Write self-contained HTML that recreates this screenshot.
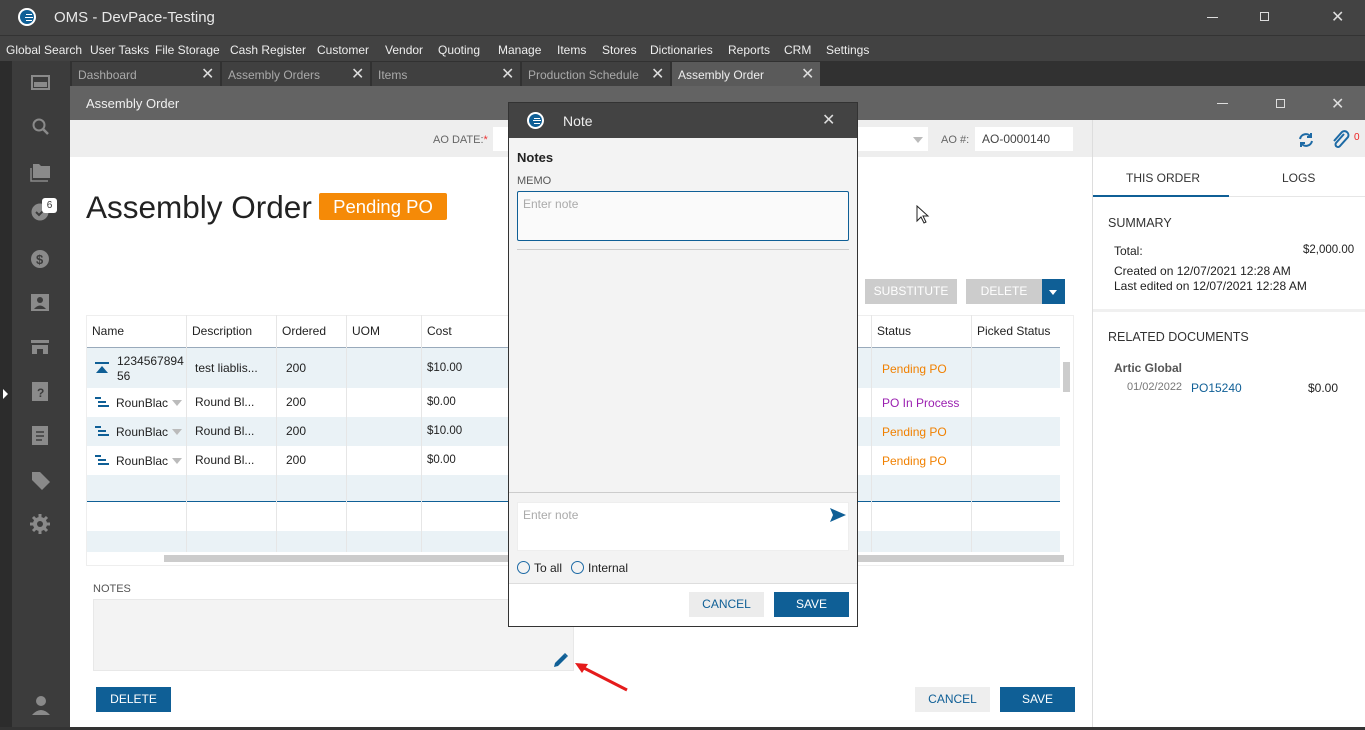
<!DOCTYPE html>
<html><head><meta charset="utf-8"><style>
*{box-sizing:border-box;margin:0;padding:0}
body{width:1365px;height:730px;overflow:hidden;position:relative;font-family:"Liberation Sans",sans-serif;font-size:12px;color:#222;background:#fff}
.a{position:absolute}
.t{white-space:nowrap}
.x{color:#ddd;font-size:16px}
.m{position:absolute;top:43px;color:#eee;font-size:12px;white-space:nowrap}
</style></head><body>
<div class="a" style="left:0;top:0;width:1365px;height:35px;background:#434343"></div>
<div class="a" style="left:18px;top:8px;width:18px;height:18px;border-radius:50%;background:#fff"></div>
<div class="a" style="left:20px;top:10px;width:14px;height:14px;border-radius:50%;background:#0f5f96"></div>
<div class="a" style="left:26px;top:14px;width:6px;height:1px;background:#fff"></div>
<div class="a" style="left:25px;top:17px;width:8px;height:1px;background:#fff"></div>
<div class="a" style="left:26px;top:20px;width:6px;height:1px;background:#fff"></div>
<div class="a t" style="left:54px;top:9px;color:#e8e8e8;font-size:15px">OMS - DevPace-Testing</div>
<div class="a" style="left:1207px;top:17px;width:11px;height:1px;background:#ddd"></div>
<div class="a" style="left:1260px;top:12px;width:9px;height:9px;border:1px solid #ddd"></div>
<div class="a t x" style="left:1331px;top:7px">✕</div>
<div class="a" style="left:0;top:35px;width:1365px;height:26px;background:#424242;border-top:1px solid #333"></div>
<div class="m" style="left:6px">Global Search</div>
<div class="m" style="left:90px">User Tasks</div>
<div class="m" style="left:155px">File Storage</div>
<div class="m" style="left:230px">Cash Register</div>
<div class="m" style="left:317px">Customer</div>
<div class="m" style="left:385px">Vendor</div>
<div class="m" style="left:438px">Quoting</div>
<div class="m" style="left:498px">Manage</div>
<div class="m" style="left:557px">Items</div>
<div class="m" style="left:602px">Stores</div>
<div class="m" style="left:650px">Dictionaries</div>
<div class="m" style="left:728px">Reports</div>
<div class="m" style="left:784px">CRM</div>
<div class="m" style="left:826px">Settings</div>
<div class="a" style="left:0;top:61px;width:12px;height:669px;background:#2c2c2c"></div>
<div class="a" style="left:12px;top:61px;width:58px;height:669px;background:#3c3c3c"></div>
<div class="a" style="left:3px;top:389px;width:0;height:0;border-top:5px solid transparent;border-bottom:5px solid transparent;border-left:5px solid #fff"></div>
<svg class="a" style="left:28px;top:70px" width="26" height="470" fill="#8a8a8a">
<rect x="4" y="6" width="17" height="13" fill="none" stroke="#8a8a8a" stroke-width="2"/><rect x="6" y="12" width="13" height="5"/>
<circle cx="11" cy="55" r="5.5" fill="none" stroke="#8a8a8a" stroke-width="2"/><path d="M15 59l5 5" stroke="#8a8a8a" stroke-width="2.5"/>
<path d="M5 94h6l2 2h9v12h-17z"/><path d="M3 98v13h17" fill="none" stroke="#8a8a8a" stroke-width="1.5"/>
<circle cx="12" cy="142" r="8.5"/><path d="M8 142l3 3 5-5" fill="none" stroke="#3c3c3c" stroke-width="2"/>
<circle cx="12" cy="189" r="9"/><text x="8" y="194" font-size="13" font-weight="bold" fill="#3c3c3c" font-family="Liberation Sans">$</text>
<rect x="3" y="224" width="18" height="17"/><circle cx="12" cy="230" r="3" fill="#3c3c3c"/><path d="M6 239q6-7 12 0z" fill="#3c3c3c"/>
<path d="M3 270h18v3h-18z M4 275h16v9h-5v-5h-6v5h-5z"/>
<rect x="4" y="312" width="16" height="19"/><text x="9" y="327" font-size="12" font-weight="bold" fill="#3c3c3c" font-family="Liberation Sans">?</text>
<rect x="4" y="356" width="16" height="19"/><path d="M8 362h8M8 366h8M8 370h6" stroke="#3c3c3c" stroke-width="1.5"/>
<path d="M4 402l8 0 10 10-8 8-10-10z"/>
<path d="M12 444v20M2 454h20M5 447l14 14M19 447l-14 14" stroke="#8a8a8a" stroke-width="3"/><circle cx="12" cy="454" r="7"/><circle cx="12" cy="454" r="3" fill="#3c3c3c"/>
</svg>
<div class="a" style="left:42px;top:198px;width:15px;height:15px;background:#fff;border-radius:3px;font-size:10px;text-align:center;line-height:15px;color:#333">6</div>
<svg class="a" style="left:30px;top:695px" width="22" height="22" fill="#8a8a8a"><circle cx="11" cy="6" r="5"/><path d="M2 20q9-10 18 0z"/></svg>
<div class="a" style="left:70px;top:61px;width:1295px;height:25px;background:#313131"></div>
<div class="a" style="left:72px;top:62px;width:148px;height:24px;background:#404040"></div>
<div class="a" style="left:222px;top:62px;width:148px;height:24px;background:#404040"></div>
<div class="a" style="left:372px;top:62px;width:148px;height:24px;background:#404040"></div>
<div class="a" style="left:522px;top:62px;width:148px;height:24px;background:#404040"></div>
<div class="a" style="left:672px;top:62px;width:148px;height:24px;background:#5a5a5a"></div>
<div class="a t" style="left:78px;top:68px;color:#aaa">Dashboard</div><div class="a x" style="left:201px;top:64px">✕</div>
<div class="a t" style="left:228px;top:68px;color:#aaa">Assembly Orders</div><div class="a x" style="left:351px;top:64px">✕</div>
<div class="a t" style="left:378px;top:68px;color:#aaa">Items</div><div class="a x" style="left:501px;top:64px">✕</div>
<div class="a t" style="left:528px;top:68px;color:#aaa">Production Schedule</div><div class="a x" style="left:651px;top:64px">✕</div>
<div class="a t" style="left:678px;top:68px;color:#eee">Assembly Order</div><div class="a x" style="left:801px;top:64px">✕</div>
<div class="a" style="left:70px;top:86px;width:1295px;height:34px;background:#636363"></div>
<div class="a t" style="left:86px;top:96px;color:#f0f0f0;font-size:13px">Assembly Order</div>
<div class="a" style="left:1217px;top:103px;width:11px;height:1px;background:#ddd"></div>
<div class="a" style="left:1276px;top:99px;width:9px;height:9px;border:1px solid #ddd"></div>
<div class="a x" style="left:1331px;top:94px">✕</div>
<div class="a" style="left:70px;top:120px;width:1022px;height:37px;background:#eeeeee"></div>
<div class="a" style="left:1092px;top:120px;width:273px;height:37px;background:#eeeeee;border-left:1px solid #ddd"></div>
<div class="a t" style="left:433px;top:134px;color:#666;font-size:11px">AO DATE:<span style="color:#e33">*</span></div>
<div class="a" style="left:493px;top:127px;width:20px;height:24px;background:#fff"></div>
<div class="a" style="left:858px;top:127px;width:70px;height:24px;background:#fff"></div>
<div class="a" style="left:913px;top:137px;border-left:5px solid transparent;border-right:5px solid transparent;border-top:6px solid #bbb"></div>
<div class="a t" style="left:941px;top:134px;color:#666;font-size:11px">AO #:</div>
<div class="a t" style="left:975px;top:127px;width:98px;height:24px;background:#fff;padding:5px 7px;font-size:12px;color:#444">AO-0000140</div>
<svg class="a" style="left:1296px;top:130px" width="20" height="20" fill="none" stroke="#1d6aa5" stroke-width="2"><path d="M4 9a6 6 0 0 1 11-2M16 11a6 6 0 0 1-11 2"/><path d="M15 3v4h-4M5 17v-4h4"/></svg>
<svg class="a" style="left:1330px;top:129px" width="20" height="22" fill="none" stroke="#1d6aa5" stroke-width="2"><path d="M14 5l-8 9a2.5 2.5 0 0 0 4 3l8-9a4 4 0 0 0-6-5l-8 9"/></svg>
<div class="a" style="left:1354px;top:132px;color:#e22;font-size:10px">0</div>
<div class="a" style="left:1092px;top:157px;width:1px;height:573px;background:#ddd"></div>
<div class="a t" style="left:1126px;top:171px;font-size:12px;color:#333">THIS ORDER</div>
<div class="a t" style="left:1282px;top:171px;font-size:12px;color:#333">LOGS</div>
<div class="a" style="left:1093px;top:195px;width:136px;height:2px;background:#0f5f96"></div>
<div class="a" style="left:1229px;top:196px;width:136px;height:1px;background:#e6e6e6"></div>
<div class="a t" style="left:1108px;top:216px;font-size:12.5px;color:#333">SUMMARY</div>
<div class="a t" style="left:1114px;top:244px">Total:</div>
<div class="a t" style="left:1303px;top:244px;font-size:11.5px">$2,000.00</div>
<div class="a t" style="left:1114px;top:264px">Created on 12/07/2021 12:28 AM</div>
<div class="a t" style="left:1114px;top:279px">Last edited on 12/07/2021 12:28 AM</div>
<div class="a" style="left:1093px;top:309px;width:272px;height:3px;background:#f0f0f0"></div>
<div class="a t" style="left:1108px;top:330px;font-size:12.5px;color:#333">RELATED DOCUMENTS</div>
<div class="a t" style="left:1114px;top:361px;color:#555;font-weight:bold">Artic Global</div>
<div class="a t" style="left:1127px;top:381px;color:#777;font-size:11px">01/02/2022</div>
<div class="a t" style="left:1191px;top:381px;color:#0f5f96">PO15240</div>
<div class="a t" style="left:1308px;top:381px">$0.00</div>
<div class="a t" style="left:86px;top:189px;font-size:31.5px;color:#222">Assembly Order</div>
<div class="a t" style="left:319px;top:193px;width:128px;background:#f58a07;color:#fff;font-size:18.5px;padding:3px 0;text-align:center;height:27px;border-radius:2px">Pending PO</div>
<svg class="a" style="left:916px;top:205px" width="14" height="20"><path d="M1 1v15l4-4 3 6 2-1-3-6h5z" fill="#fff" stroke="#222"/></svg>
<div class="a t" style="left:865px;top:279px;width:92px;height:25px;background:#ccc;color:#fff;text-align:center;line-height:25px">SUBSTITUTE</div>
<div class="a t" style="left:966px;top:279px;width:76px;height:25px;background:#ccc;color:#fff;text-align:center;line-height:25px">DELETE</div>
<div class="a" style="left:1042px;top:279px;width:23px;height:25px;background:#0f5f96"></div>
<div class="a" style="left:1049px;top:290px;border-left:4px solid transparent;border-right:4px solid transparent;border-top:5px solid #fff"></div>
<div class="a" style="left:86px;top:315px;width:988px;height:251px;border:1px solid #eee"></div>
<div class="a" style="left:87px;top:347px;width:973px;height:1px;background:#9ab"></div>
<div class="a" style="left:87px;top:348px;width:973px;height:40px;background:#eaf2f6"></div>
<div class="a" style="left:87px;top:417px;width:973px;height:29px;background:#eaf2f6"></div>
<div class="a" style="left:87px;top:475px;width:973px;height:27px;background:#eaf2f6"></div>
<div class="a" style="left:87px;top:501px;width:973px;height:1px;background:#0f5f96"></div>
<div class="a" style="left:87px;top:531px;width:973px;height:21px;background:#eaf2f6"></div>
<div class="a" style="left:164px;top:555px;width:900px;height:7px;background:#ccc"></div>
<div class="a" style="left:1063px;top:362px;width:7px;height:30px;background:#ccc"></div>
<div class="a" style="left:186px;top:315px;width:1px;height:237px;background:#e6e6e6"></div>
<div class="a" style="left:276px;top:315px;width:1px;height:237px;background:#e6e6e6"></div>
<div class="a" style="left:346px;top:315px;width:1px;height:237px;background:#e6e6e6"></div>
<div class="a" style="left:421px;top:315px;width:1px;height:237px;background:#e6e6e6"></div>
<div class="a" style="left:871px;top:315px;width:1px;height:237px;background:#e6e6e6"></div>
<div class="a" style="left:971px;top:315px;width:1px;height:237px;background:#e6e6e6"></div>
<div class="a t" style="left:92px;top:324px">Name</div>
<div class="a t" style="left:192px;top:324px">Description</div>
<div class="a t" style="left:282px;top:324px">Ordered</div>
<div class="a t" style="left:352px;top:324px">UOM</div>
<div class="a t" style="left:427px;top:324px">Cost</div>
<div class="a t" style="left:877px;top:324px">Status</div>
<div class="a t" style="left:977px;top:324px">Picked Status</div>
<svg class="a" style="left:95px;top:362px" width="14" height="12" fill="#0f5f96"><rect x="0" y="0" width="14" height="2"/><path d="M7 4l6 7h-12z"/></svg>
<div class="a" style="left:117px;top:354px;font-size:12px;line-height:15px">1234567894<br>56</div>
<div class="a t" style="left:195px;top:361px">test liablis...</div>
<div class="a t" style="left:286px;top:361px">200</div>
<div class="a t" style="left:427px;top:362px;font-size:11.5px">$10.00</div>
<div class="a t" style="left:882px;top:362px;color:#f08000">Pending PO</div>
<div class="a" style="left:95px;top:397px;line-height:0"><svg width="14" height="11" fill="#0f5f96"><rect x="0" y="0" width="6" height="2"/><rect x="3" y="4" width="8" height="2"/><rect x="3" y="8" width="11" height="2"/></svg></div>
<div class="a t" style="left:116px;top:396px">RounBlac</div><div class="a" style="left:172px;top:400px;border-left:5px solid transparent;border-right:5px solid transparent;border-top:6px solid #bbb"></div>
<div class="a t" style="left:195px;top:395px">Round Bl...</div><div class="a t" style="left:286px;top:395px">200</div><div class="a t" style="left:427px;top:396px;font-size:11.5px">$0.00</div>
<div class="a t" style="left:882px;top:396px;color:#9a1fb0">PO In Process</div>
<div class="a" style="left:95px;top:426px;line-height:0"><svg width="14" height="11" fill="#0f5f96"><rect x="0" y="0" width="6" height="2"/><rect x="3" y="4" width="8" height="2"/><rect x="3" y="8" width="11" height="2"/></svg></div>
<div class="a t" style="left:116px;top:425px">RounBlac</div><div class="a" style="left:172px;top:429px;border-left:5px solid transparent;border-right:5px solid transparent;border-top:6px solid #bbb"></div>
<div class="a t" style="left:195px;top:424px">Round Bl...</div><div class="a t" style="left:286px;top:424px">200</div><div class="a t" style="left:427px;top:425px;font-size:11.5px">$10.00</div>
<div class="a t" style="left:882px;top:425px;color:#f08000">Pending PO</div>
<div class="a" style="left:95px;top:455px;line-height:0"><svg width="14" height="11" fill="#0f5f96"><rect x="0" y="0" width="6" height="2"/><rect x="3" y="4" width="8" height="2"/><rect x="3" y="8" width="11" height="2"/></svg></div>
<div class="a t" style="left:116px;top:454px">RounBlac</div><div class="a" style="left:172px;top:458px;border-left:5px solid transparent;border-right:5px solid transparent;border-top:6px solid #bbb"></div>
<div class="a t" style="left:195px;top:453px">Round Bl...</div><div class="a t" style="left:286px;top:453px">200</div><div class="a t" style="left:427px;top:454px;font-size:11.5px">$0.00</div>
<div class="a t" style="left:882px;top:454px;color:#f08000">Pending PO</div>
<div class="a t" style="left:93px;top:583px;font-size:11px;color:#555">NOTES</div>
<div class="a" style="left:93px;top:599px;width:481px;height:72px;background:#f3f3f3;border:1px solid #e8e8e8"></div>
<svg class="a" style="left:553px;top:652px" width="16" height="16" fill="#0f5f96"><path d="M1 15l1-4 9-9 3 3-9 9z"/><path d="M12 1l3 3-1 1-3-3z"/></svg>
<svg class="a" style="left:572px;top:660px" width="60" height="34"><path d="M55 30L8 6" stroke="#e51b1b" stroke-width="3"/><path d="M3 3l13 1-6 9z" fill="#e51b1b"/></svg>
<div class="a t" style="left:96px;top:687px;width:75px;height:25px;background:#0f5f96;color:#fff;text-align:center;line-height:25px">DELETE</div>
<div class="a t" style="left:915px;top:687px;width:75px;height:25px;background:#eee;color:#0f5f96;text-align:center;line-height:25px">CANCEL</div>
<div class="a t" style="left:1000px;top:687px;width:75px;height:25px;background:#0f5f96;color:#fff;text-align:center;line-height:25px">SAVE</div>
<div class="a" style="left:0;top:727px;width:1365px;height:3px;background:#333"></div>
<div class="a" style="left:508px;top:102px;width:350px;height:525px;background:#f3f3f3;border:1px solid #333"></div>
<div class="a" style="left:509px;top:103px;width:348px;height:35px;background:#434343"></div>
<div class="a" style="left:527px;top:112px;width:17px;height:17px;border-radius:50%;background:#fff"></div>
<div class="a" style="left:529px;top:114px;width:13px;height:13px;border-radius:50%;background:#0f5f96"></div>
<div class="a" style="left:534px;top:118px;width:6px;height:1px;background:#fff"></div>
<div class="a" style="left:533px;top:120px;width:8px;height:1px;background:#fff"></div>
<div class="a" style="left:534px;top:123px;width:6px;height:1px;background:#fff"></div>
<div class="a t" style="left:563px;top:113px;color:#eee;font-size:14px">Note</div>
<div class="a x" style="left:822px;top:110px">✕</div>
<div class="a t" style="left:517px;top:150px;font-size:13px;font-weight:bold;color:#222">Notes</div>
<div class="a t" style="left:517px;top:175px;font-size:11px;color:#555">MEMO</div>
<div class="a" style="left:517px;top:191px;width:332px;height:50px;background:#fafafa;border:1px solid #0f5f96;border-radius:2px"></div>
<div class="a t" style="left:523px;top:197px;color:#aaa">Enter note</div>
<div class="a" style="left:517px;top:249px;width:332px;height:1px;background:#ccc"></div>
<div class="a" style="left:509px;top:492px;width:348px;height:1px;background:#ccc"></div>
<div class="a" style="left:517px;top:502px;width:332px;height:49px;background:#fff;border:1px solid #eee"></div>
<div class="a t" style="left:523px;top:508px;color:#aaa">Enter note</div>
<svg class="a" style="left:829px;top:507px" width="18" height="16"><path d="M1 1l16 7-16 7 3-7z" fill="#0f5f96"/></svg>
<div class="a" style="left:517px;top:561px;width:13px;height:13px;border:1.5px solid #1d6aa5;border-radius:50%"></div>
<div class="a t" style="left:534px;top:561px">To all</div>
<div class="a" style="left:571px;top:561px;width:13px;height:13px;border:1.5px solid #1d6aa5;border-radius:50%"></div>
<div class="a t" style="left:588px;top:561px">Internal</div>
<div class="a" style="left:509px;top:583px;width:348px;height:43px;background:#fff;border-top:1px solid #ddd"></div>
<div class="a t" style="left:689px;top:592px;width:75px;height:25px;background:#ececec;color:#0f5f96;text-align:center;line-height:25px">CANCEL</div>
<div class="a t" style="left:774px;top:592px;width:75px;height:25px;background:#0f5f96;color:#fff;text-align:center;line-height:25px">SAVE</div>
</body></html>
